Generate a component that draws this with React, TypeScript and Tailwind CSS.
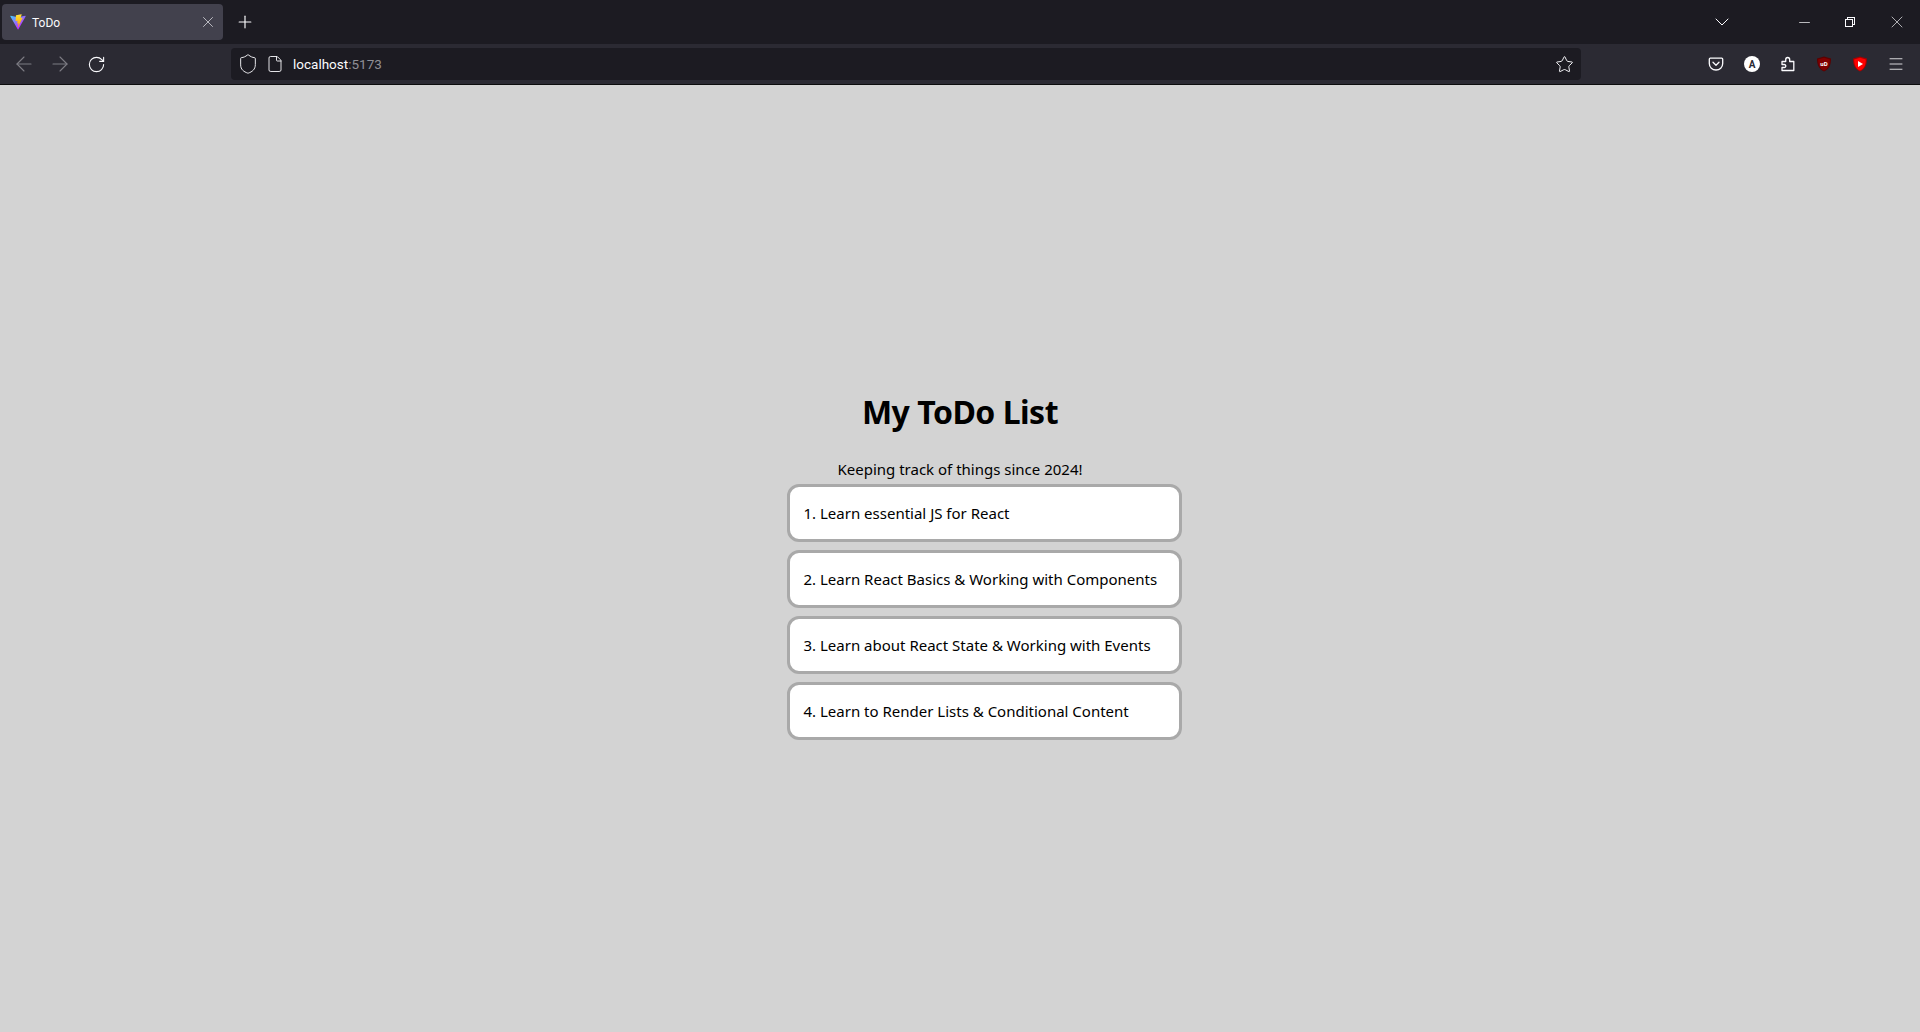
import React from "react";
import { ArrowLeft, ArrowRight, RotateCw, Shield, File, Star, ChevronDown, Minus, X, Plus, Menu } from "lucide-react";

const items = [
  "1. Learn essential JS for React",
  "2. Learn React Basics & Working with Components",
  "3. Learn about React State & Working with Events",
  "4. Learn to Render Lists & Conditional Content",
];

function Vite() {
  return (
    <svg width="16" height="16" viewBox="0 0 410 404">
      <defs>
        <linearGradient id="va" x1="6" y1="33" x2="235" y2="344" gradientUnits="userSpaceOnUse">
          <stop stopColor="#41D1FF" />
          <stop offset="1" stopColor="#BD34FE" />
        </linearGradient>
        <linearGradient id="vb" x1="194" y1="8" x2="236" y2="292" gradientUnits="userSpaceOnUse">
          <stop stopColor="#FFEA83" />
          <stop offset="0.08" stopColor="#FFDD35" />
          <stop offset="1" stopColor="#FFA800" />
        </linearGradient>
      </defs>
      <path d="M399.6 59.5 215 389.6c-3.8 6.8-13.6 6.9-17.5.1L9.2 59.5C5 52.100 11.300 43.200 19.700 44.700L204.500 77.700c1.200.2 2.400.2 3.600 0L389 44.800c8.300-1.500 14.700 7.300 10.600 14.700Z" fill="url(#va)" />
      <path d="M292.900 1.600 156.400 28.300c-2.200.4-3.900 2.300-4 4.600l-8.400 141.700c-.2 3.300 2.900 5.900 6.100 5.200l38-8.800c3.600-.8 6.800 2.300 6.100 5.900l-11.300 55.300c-.8 3.700 2.700 6.900 6.300 5.800l23.500-7.100c3.600-1.100 7.100 2.100 6.300 5.800l-18 87c-1.100 5.400 6.100 8.400 9.100 3.700l2-3.100 111.100-221.700c1.900-3.700-1.300-7.900-5.400-7.100l-39.100 7.500c-3.700.7-6.800-2.700-5.700-6.300l25.500-88.400c1.100-3.600-2.100-7.100-5.800-6.300Z" fill="url(#vb)" />
    </svg>
  );
}

function Pocket() {
  return (
    <svg width="16" height="16" viewBox="0 0 16 16" fill="none" stroke="#fbfbfe" strokeWidth="1.3" strokeLinecap="round" strokeLinejoin="round">
      <path d="M2.300 2.200h11.400c.6 0 1 .4 1 1v4.300c0 3.800-3 6.500-6.700 6.500S1.300 11.300 1.300 7.500V3.200c0-.6.400-1 1-1Z" />
      <path d="m5 6.300 3 2.900 3-2.900" />
    </svg>
  );
}

function PuzzleIcon() {
  return (
    <svg width="16" height="16" viewBox="0 0 16 16" fill="none" stroke="#fbfbfe" strokeWidth="1.3" strokeLinejoin="round" strokeLinecap="round">
      <path d="M2 5.500h3.700V3.700c0-1.200.8-2.200 2-2.200s2 1 2 2.200v1.800h4.100v9H2v-3h2.300c.9 0 1.500-.7 1.500-1.500S5.200 8.500 4.300 8.500H2Z" />
    </svg>
  );
}

function Shieldish({ fill, dark, children }: { fill: string; dark: string; children: React.ReactNode }) {
  return (
    <svg width="16" height="16" viewBox="0 0 16 16">
      <path d="M8 .5 15 2.500c0 6-1.500 10.500-7 13-5.500-2.500-7-7-7-13Z" fill={dark} />
      <path d="M8 1.800 13.800 3.400c0 5-1.300 9-5.800 11-4.500-2-5.800-6-5.800-11Z" fill={fill} />
      {children}
    </svg>
  );
}

function Restore() {
  return (
    <svg width="10" height="10" viewBox="0 0 10 10" fill="none" stroke="#fbfbfe" strokeWidth="1" shapeRendering="crispEdges">
      <rect x="0.500" y="2.500" width="7" height="7" rx="1" />
      <path d="M2.500 2.500V.5h7v7H7.500" />
    </svg>
  );
}

export default function App() {
  return (
    <div className="min-h-[1032px] flex flex-col bg-[#d3d3d3] font-['Noto_Sans','Open_Sans',sans-serif] text-black">
      <header className="h-[85px] shrink-0 flex flex-col border-b border-[#0c0c0d] font-['Roboto','Noto_Sans',sans-serif]">
        <div className="h-[44px] bg-[#1c1b22] flex items-center">
          <div className="ml-[2px] w-[221px] h-[36px] rounded-[4px] bg-[#42414d] flex items-center pl-[8px] pr-[6px] text-[#fbfbfe]">
            <Vite />
            <span className="ml-[6px] text-[12px] flex-1 pt-[1px]">ToDo</span>
            <X size={18} strokeWidth={1} className="text-[#e0e0e6]" />
          </div>
          <Plus size={20} strokeWidth={1.4} className="ml-[12px] text-[#fbfbfe]" />
          <div className="flex-1" />
          <ChevronDown size={24} strokeWidth={1} className="text-[#fbfbfe] mr-[62px]" />
          <Minus size={17} strokeWidth={1} className="text-[#fbfbfe] mr-[32px]" />
          <Restore />
          <X size={20} strokeWidth={0.8} className="text-[#fbfbfe] ml-[32px] mr-[13px]" />
        </div>
        <div className="h-[40px] bg-[#2b2a33] flex items-center">
          <ArrowLeft size={24} strokeWidth={1.1} className="ml-[12px] text-[#7d7c84]" />
          <ArrowRight size={24} strokeWidth={1.1} className="ml-[12px] text-[#7d7c84]" />
          <RotateCw size={19} strokeWidth={1.4} className="ml-[14.5px] text-[#fbfbfe]" />
          <div className="ml-[125.5px] w-[1350px] h-[32px] rounded-[4px] bg-[#1c1b22] flex items-center pl-[5.5px] pr-[7px] text-[#fbfbfe]">
            <Shield size={22} strokeWidth={1} />
            <File size={18} strokeWidth={1.2} className="ml-[7.5px]" />
            <span className="ml-[9px] text-[13.5px] pt-[1px]">
              localhost<span className="text-[#8f8f96]">:5173</span>
            </span>
            <div className="flex-1" />
            <Star size={19} strokeWidth={1.2} />
          </div>
          <div className="flex-1" />
          <Pocket />
          <div className="ml-[20px] w-[16px] h-[16px] rounded-full bg-white flex items-center justify-center text-[10px] font-bold text-[#2b2a33]">A</div>
          <div className="ml-[20px] flex">
            <PuzzleIcon />
          </div>
          <div className="ml-[20px] flex">
            <Shieldish fill="#800000" dark="#5c0000">
              <text x="8" y="10" textAnchor="middle" fontSize="6" fontWeight="700" fill="#fff">uD</text>
            </Shieldish>
          </div>
          <div className="ml-[20px] flex">
            <Shieldish fill="#ff0000" dark="#a50000">
              <path d="M6 5l5 3-5 3Z" fill="#fff" />
            </Shieldish>
          </div>
          <Menu size={18} strokeWidth={1.1} className="ml-[19px] mr-[15px] text-[#fbfbfe]" />
        </div>
      </header>
      <main className="flex-1 flex flex-col items-center pt-[305px]">
        <h1 className="text-[32px] leading-[44px] font-bold tracking-[-0.5px]">My ToDo List</h1>
        <p className="mt-[23px] text-[15px] leading-[24px]">Keeping track of things since 2024!</p>
        <ul className="ml-[48px] mt-[3px] w-[395px] flex flex-col gap-[8px] list-none">
          {items.map((t) => (
            <li key={t} className="h-[58px] border-[3px] border-[#a9a9a9] rounded-[12px] bg-white flex items-center px-[14px] text-[15px] whitespace-nowrap">
              {t}
            </li>
          ))}
        </ul>
      </main>
    </div>
  );
}
